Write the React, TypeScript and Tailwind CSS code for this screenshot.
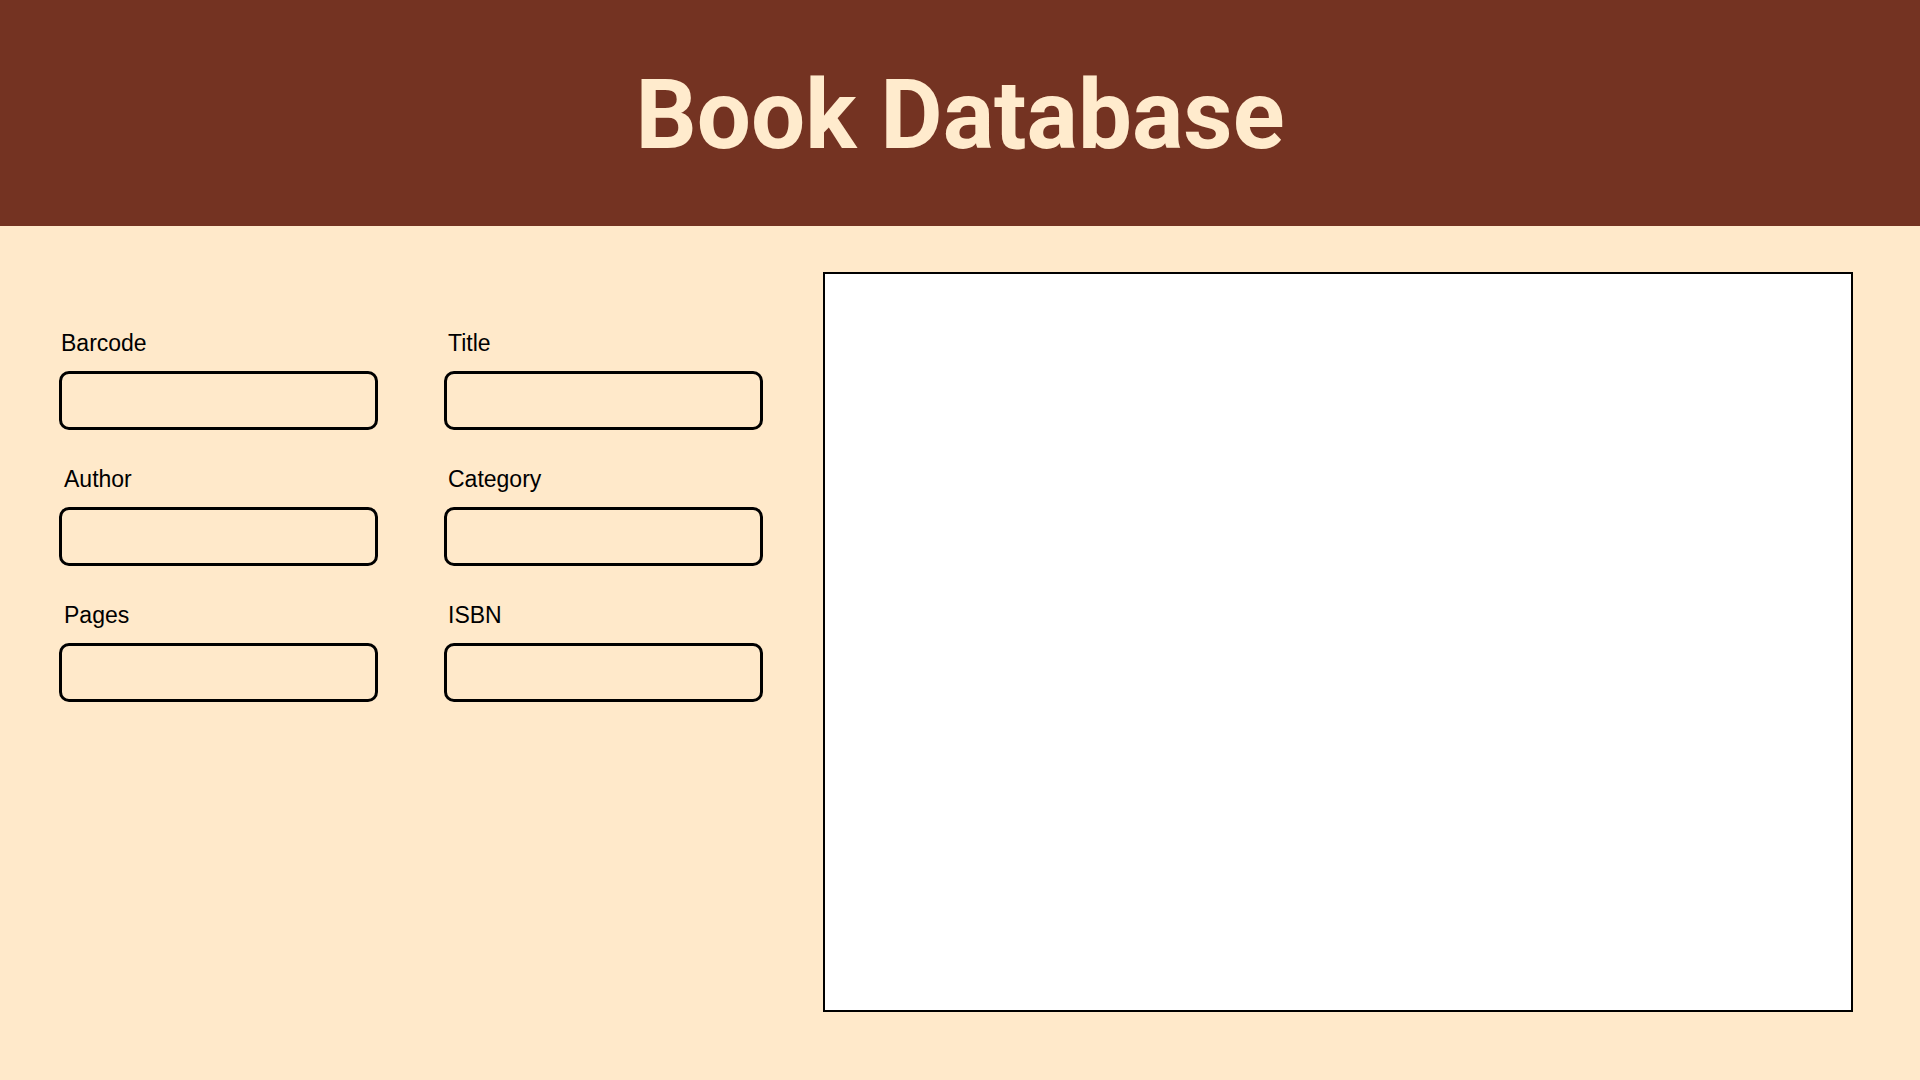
import React from "react";

const fields = [
  { id: "barcode", label: "Barcode", pad: "pl-[2px]" },
  { id: "title", label: "Title", pad: "pl-[4px]" },
  { id: "author", label: "Author", pad: "pl-[5px]" },
  { id: "category", label: "Category", pad: "pl-[4px]" },
  { id: "pages", label: "Pages", pad: "pl-[5px]" },
  { id: "isbn", label: "ISBN", pad: "pl-[4px]" },
];

export default function App() {
  return (
    <div className="min-h-screen flex flex-col bg-[#FFE9CA]">
      <header className="h-[226px] shrink-0 bg-[#743322] flex items-center justify-center pt-[4px]">
        <h1 className="font-['Roboto',sans-serif] font-bold text-[96px] leading-none text-[#FFEBCD]">
          Book Database
        </h1>
      </header>

      <main className="flex-1 flex pl-[59px] pr-[67px] pt-[46px] pb-[68px] gap-[60px]">
        <form
          className="grid grid-cols-[319px_319px] gap-x-[66px] gap-y-[36px] content-start pt-[58px] font-['Liberation_Sans',Arial,sans-serif]"
          onSubmit={(e) => e.preventDefault()}
        >
          {fields.map((f) => (
            <div key={f.id} className="flex flex-col">
              <label htmlFor={f.id} className={`h-[26px] leading-[26px] text-[23px] text-black mb-[15px] ${f.pad}`}>
                {f.label}
              </label>
              <input
                id={f.id}
                type="text"
                className="h-[59px] w-full rounded-[10px] border-[3px] border-black bg-transparent px-3 text-[20px] outline-none"
              />
            </div>
          ))}
        </form>

        <section className="flex-1 bg-white border-2 border-black" />
      </main>
    </div>
  );
}
